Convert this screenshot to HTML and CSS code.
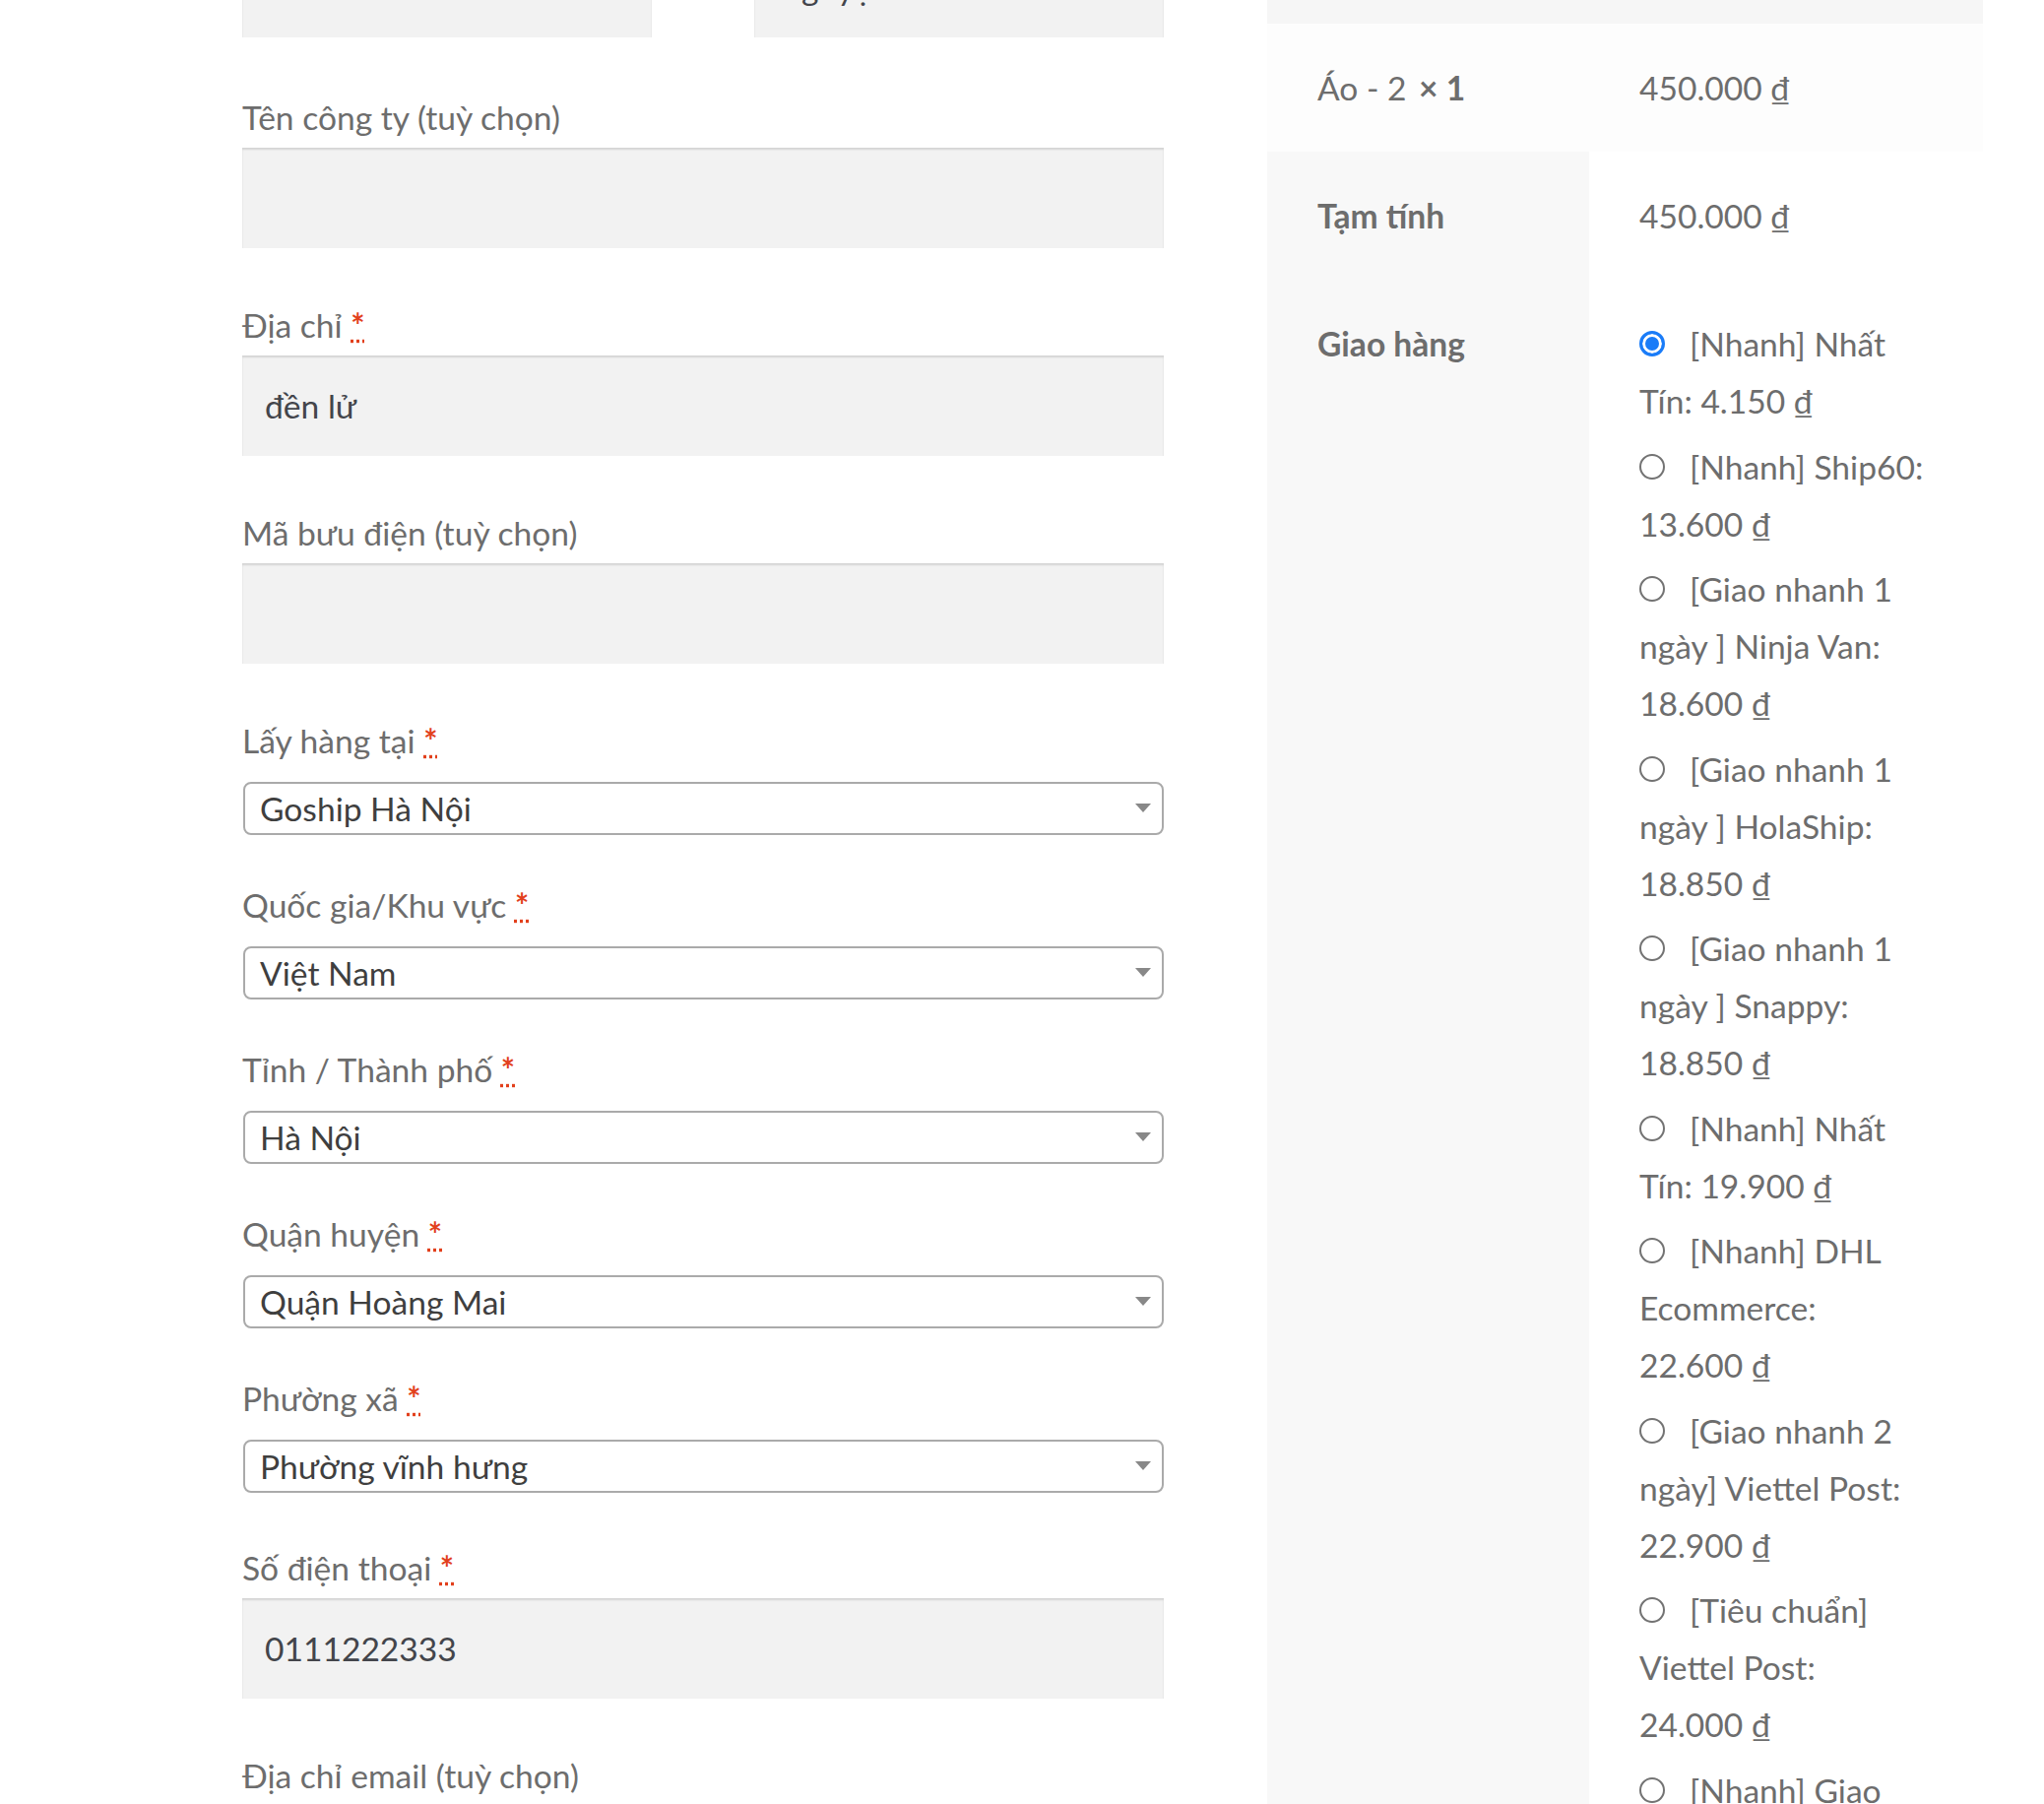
FILE: index.html
```html
<!DOCTYPE html>
<html lang="vi">
<head>
<meta charset="utf-8">
<title>Thanh toán</title>
<link rel="stylesheet" href="styles.css">
</head>
<body>
<div class="page">
  <div class="billing">
    <div class="split">
      <p class="field"><input class="input-text" type="text" value=""></p>
      <p class="field"><input class="input-text" type="text" value="Nguyệt"></p>
    </div>

    <div class="form-row">
      <label>Tên công ty <span class="optional">(tuỳ chọn)</span></label>
      <input class="input-text" type="text" value="">
    </div>

    <div class="form-row">
      <label>Địa chỉ <abbr class="required" title="bắt buộc">*</abbr></label>
      <input class="input-text" type="text" value="đền lử">
    </div>

    <div class="form-row">
      <label>Mã bưu điện <span class="optional">(tuỳ chọn)</span></label>
      <input class="input-text" type="text" value="">
    </div>

    <div class="form-row select-row">
      <label>Lấy hàng tại <abbr class="required" title="bắt buộc">*</abbr></label>
      <div class="select-box">Goship Hà Nội</div>
    </div>

    <div class="form-row select-row">
      <label>Quốc gia/Khu vực <abbr class="required" title="bắt buộc">*</abbr></label>
      <div class="select-box">Việt Nam</div>
    </div>

    <div class="form-row select-row">
      <label>Tỉnh / Thành phố <abbr class="required" title="bắt buộc">*</abbr></label>
      <div class="select-box">Hà Nội</div>
    </div>

    <div class="form-row select-row">
      <label>Quận huyện <abbr class="required" title="bắt buộc">*</abbr></label>
      <div class="select-box">Quận Hoàng Mai</div>
    </div>

    <div class="form-row select-row select-last">
      <label>Phường xã <abbr class="required" title="bắt buộc">*</abbr></label>
      <div class="select-box">Phường vĩnh hưng</div>
    </div>

    <div class="form-row">
      <label>Số điện thoại <abbr class="required" title="bắt buộc">*</abbr></label>
      <input class="input-text" type="text" value="0111222333">
    </div>

    <div class="form-row">
      <label>Địa chỉ email <span class="optional">(tuỳ chọn)</span></label>
      <input class="input-text" type="text" value="">
    </div>
  </div>

  <div class="review">
    <table class="review-table">
      <colgroup><col class="col-name"><col class="col-total"></colgroup>
      <thead>
        <tr><th>Sản phẩm</th><th>Tạm tính</th></tr>
      </thead>
      <tbody>
        <tr>
          <td>Áo - 2 <strong class="qty">×&nbsp;1</strong></td>
          <td>450.000&nbsp;₫</td>
        </tr>
      </tbody>
      <tfoot>
        <tr class="subtotal">
          <th>Tạm tính</th>
          <td>450.000&nbsp;₫</td>
        </tr>
        <tr class="shipping">
          <th>Giao hàng</th>
          <td>
            <ul class="shipping-methods">
              <li><input type="radio" name="ship" checked><label>[Nhanh] Nhất Tín: <span class="amount">4.150&nbsp;₫</span></label></li>
              <li><input type="radio" name="ship"><label>[Nhanh] Ship60: <span class="amount">13.600&nbsp;₫</span></label></li>
              <li><input type="radio" name="ship"><label>[Giao nhanh 1 ngày ] Ninja Van: <span class="amount">18.600&nbsp;₫</span></label></li>
              <li><input type="radio" name="ship"><label>[Giao nhanh 1 ngày ] HolaShip: <span class="amount">18.850&nbsp;₫</span></label></li>
              <li><input type="radio" name="ship"><label>[Giao nhanh 1 ngày ] Snappy: <span class="amount">18.850&nbsp;₫</span></label></li>
              <li><input type="radio" name="ship"><label>[Nhanh] Nhất Tín: <span class="amount">19.900&nbsp;₫</span></label></li>
              <li><input type="radio" name="ship"><label>[Nhanh] DHL Ecommerce: <span class="amount">22.600&nbsp;₫</span></label></li>
              <li><input type="radio" name="ship"><label>[Giao nhanh 2 ngày] Viettel Post: <span class="amount">22.900&nbsp;₫</span></label></li>
              <li><input type="radio" name="ship"><label>[Tiêu chuẩn] Viettel Post: <span class="amount">24.000&nbsp;₫</span></label></li>
              <li><input type="radio" name="ship"><label>[Nhanh] Giao Hàng Nhanh: <span class="amount">25.300&nbsp;₫</span></label></li>
            </ul>
          </td>
        </tr>
      </tfoot>
    </table>
  </div>
</div>
</body>
</html>
```

FILE: styles.css
```css
html {
  overflow: hidden;
}

body {
  margin: 0;
  height: 1832px;
  overflow: hidden;
  background: #ffffff;
  color: #6d6d6d;
  font-family: "Lato", "Noto Sans", sans-serif;
  font-size: 33.6px;
  line-height: 58px;
}

.page {
  display: flex;
  align-items: flex-start;
  gap: 105px;
  padding-left: 246px;
}

/* ---------- billing form ---------- */
.billing {
  flex: none;
  width: 936px;
}

.split {
  display: flex;
  justify-content: space-between;
  margin-top: -64px;
  margin-bottom: 54px;
}

.split .field {
  margin: 0;
  width: 416px;
}

.form-row {
  margin-bottom: 51px;
}

.form-row label {
  display: block;
  position: relative;
  top: -2px;
}

.required {
  color: #e2401c;
  font-weight: 700;
  text-decoration: underline dotted;
  cursor: help;
}

.input-text {
  display: block;
  box-sizing: border-box;
  width: 100%;
  height: 102px;
  margin: 0;
  padding: 0 23px;
  border: 0;
  background: #f2f2f2;
  box-shadow: inset 0 2px 2px rgba(0, 0, 0, 0.125);
  color: #43454b;
  font: inherit;
  outline: none;
}

.select-row {
  margin-bottom: 44px;
}

.select-row.select-last {
  margin-bottom: 49px;
}

.select-row label {
  margin-bottom: 11px;
}

.select-box {
  position: relative;
  box-sizing: border-box;
  height: 54px;
  margin-left: 1px;
  padding: 0 40px 0 15px;
  display: flex;
  align-items: center;
  border: 2px solid #aaaaaa;
  border-radius: 8px;
  background: #ffffff;
  color: #3f3f3f;
}

.select-box::after {
  content: "";
  position: absolute;
  right: 11px;
  top: 50%;
  margin-top: -5px;
  border-left: 8px solid transparent;
  border-right: 8px solid transparent;
  border-top: 9px solid #888888;
}

/* ---------- order review ---------- */
.review {
  flex: none;
  width: 727px;
}

.review-table {
  width: 727px;
  margin-top: -106px;
  border-collapse: collapse;
  table-layout: fixed;
}

.col-name {
  width: 327px;
}

.col-total {
  width: 400px;
}

.review-table th,
.review-table td {
  padding: 36px 51px;
  text-align: left;
  vertical-align: top;
}

.review-table thead th {
  background: #f6f6f6;
  font-weight: 700;
}

.review-table tbody td {
  background: #fdfdfd;
}

.review-table tfoot th {
  background: #f8f8f8;
  font-weight: 700;
}

.review-table tfoot td {
  background: #ffffff;
}

.qty {
  margin-left: 4px;
  font-weight: 700;
}

.shipping-methods {
  list-style: none;
  margin: 0;
  padding: 0;
}

.shipping-methods li {
  margin-bottom: 8.5px;
}

.shipping-methods input[type="radio"] {
  -webkit-appearance: none;
  appearance: none;
  box-sizing: border-box;
  width: 26px;
  height: 26px;
  margin: 0 25px 0 0;
  border: 2px solid #737373;
  border-radius: 50%;
  background: #ffffff;
  vertical-align: baseline;
}

.shipping-methods input[type="radio"]:checked {
  border: 3px solid #1a7cf8;
  background: #1a7cf8;
  box-shadow: inset 0 0 0 3px #ffffff;
}
```
